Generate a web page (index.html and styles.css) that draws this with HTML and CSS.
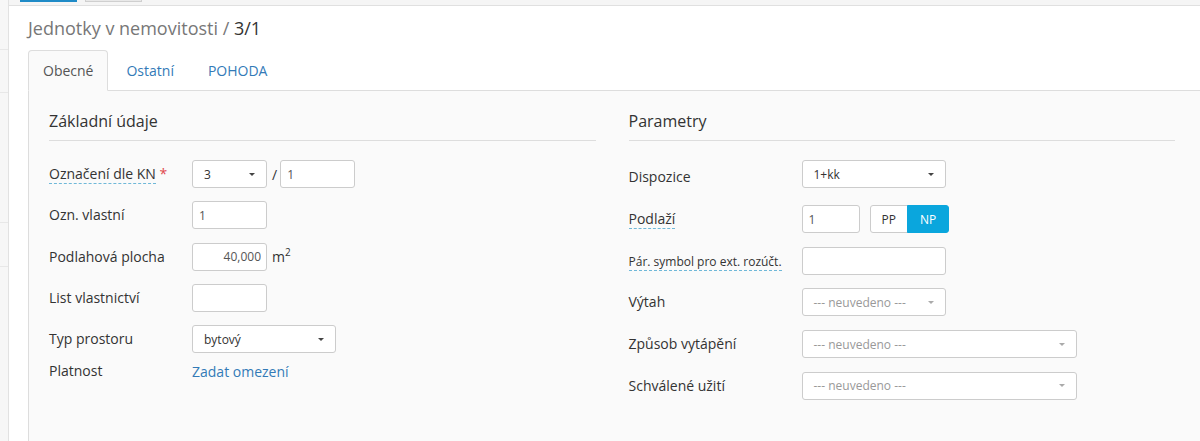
FILE: index.html
```html
<!DOCTYPE html>
<html lang="cs">
<head>
    <meta charset="UTF-8">
    <meta name="viewport" content="width=device-width, initial-scale=1.0">
    <title>Jednotky v nemovitosti</title>
    <link rel="stylesheet" href="styles.css">
</head>
<body>
<div class="app">
    <!-- sidebar, mostly scrolled out of view -->
    <aside class="sidebar">
        <div class="side-row side-row-1"></div>
        <div class="side-row side-row-2"></div>
        <div class="side-row side-row-3"></div>
        <div class="side-row side-row-4"></div>
    </aside>

    <div class="page">
        <div class="toolbar">
            <span class="stub stub-primary"></span>
            <span class="stub stub-default"></span>
        </div>

        <div class="content">
            <h1 class="page-title">Jednotky v nemovitosti / <span class="page-title-id">3/1</span></h1>

            <ul class="tabs">
                <li class="tab active"><a href="#">Obecné</a></li>
                <li class="tab"><a href="#">Ostatní</a></li>
                <li class="tab"><a href="#">POHODA</a></li>
            </ul>

            <div class="tab-panel">
                <div class="columns">
                    <!-- Základní údaje -->
                    <section class="column column-main">
                        <h2 class="section-title">Základní údaje</h2>

                        <div class="field">
                            <label class="field-label"><span class="hint">Označení dle KN</span> <span class="required">*</span></label>
                            <div class="field-control">
                                <div class="select select-xs"><span>3</span><b class="caret"></b></div>
                                <span class="sep">/</span>
                                <input class="input input-xs" type="text" value="1">
                            </div>
                        </div>

                        <div class="field">
                            <label class="field-label">Ozn. vlastní</label>
                            <div class="field-control">
                                <input class="input input-xs" type="text" value="1">
                            </div>
                        </div>

                        <div class="field">
                            <label class="field-label">Podlahová plocha</label>
                            <div class="field-control">
                                <input class="input input-xs input-num" type="text" value="40,000">
                                <span class="unit">m<sup>2</sup></span>
                            </div>
                        </div>

                        <div class="field">
                            <label class="field-label">List vlastnictví</label>
                            <div class="field-control">
                                <input class="input input-xs" type="text" value="">
                            </div>
                        </div>

                        <div class="field field-tight">
                            <label class="field-label">Typ prostoru</label>
                            <div class="field-control">
                                <div class="select select-md"><span>bytový</span><b class="caret"></b></div>
                            </div>
                        </div>

                        <div class="field field-static">
                            <label class="field-label">Platnost</label>
                            <div class="field-control">
                                <a class="link" href="#">Zadat omezení</a>
                            </div>
                        </div>
                    </section>

                    <!-- Parametry -->
                    <section class="column column-side">
                        <h2 class="section-title">Parametry</h2>

                        <div class="field field-spaced">
                            <label class="field-label field-label-low">Dispozice</label>
                            <div class="field-control">
                                <div class="select select-md"><span>1+kk</span><b class="caret"></b></div>
                            </div>
                        </div>

                        <div class="field">
                            <label class="field-label"><span class="hint">Podlaží</span></label>
                            <div class="field-control">
                                <input class="input input-floor" type="text" value="1">
                                <div class="btn-group">
                                    <button class="btn" type="button">PP</button>
                                    <button class="btn active" type="button">NP</button>
                                </div>
                            </div>
                        </div>

                        <div class="field">
                            <label class="field-label"><span class="hint hint-sm">Pár. symbol pro ext. rozúčt.</span></label>
                            <div class="field-control">
                                <input class="input input-md" type="text" value="">
                            </div>
                        </div>

                        <div class="field">
                            <label class="field-label">Výtah</label>
                            <div class="field-control">
                                <div class="select select-md is-empty"><span>--- neuvedeno ---</span><b class="caret"></b></div>
                            </div>
                        </div>

                        <div class="field">
                            <label class="field-label">Způsob vytápění</label>
                            <div class="field-control">
                                <div class="select select-lg is-empty"><span>--- neuvedeno ---</span><b class="caret"></b></div>
                            </div>
                        </div>

                        <div class="field">
                            <label class="field-label">Schválené užití</label>
                            <div class="field-control">
                                <div class="select select-lg is-empty"><span>--- neuvedeno ---</span><b class="caret"></b></div>
                            </div>
                        </div>
                    </section>
                </div>
            </div>
        </div>
    </div>
</div>
</body>
</html>
```

FILE: styles.css
```css
* {
    box-sizing: border-box;
}
html, body {
    margin: 0;
    height: 100%;
    overflow: hidden;
}
body {
    font-family: "Open Sans", "Liberation Sans", sans-serif;
    font-size: 14px;
    color: #333;
    background: #fff;
}
.app {
    display: flex;
    min-height: 100vh;
}

/* sidebar */
.sidebar {
    width: 9px;
    flex-shrink: 0;
    background: #f7f7f7;
    border-right: 1px solid #e2e2e2;
}
.side-row {
    border-bottom: 1px solid #e8e8e8;
}
.side-row-1 { height: 50px; }
.side-row-2 { height: 43px; }
.side-row-3 { height: 130px; }
.side-row-4 { height: 44px; }

.page {
    flex: 1;
    min-width: 0;
    display: flex;
    flex-direction: column;
}

/* toolbar, scrolled up */
.toolbar {
    height: 6px;
    display: flex;
    gap: 8px;
    padding-left: 11px;
    background: #f5f5f5;
    border-bottom: 1px solid #e0e0e0;
}
.stub {
    display: block;
    width: 57px;
    height: 2px;
}
.stub-primary {
    background: #1f8bc7;
}
.stub-default {
    background: #e8e8e8;
    border: 1px solid #cfcfcf;
    border-top: 0;
}

.content {
    flex: 1;
    display: flex;
    flex-direction: column;
    padding: 10px 0 0 19px;
}
.page-title {
    margin: 0 0 10px;
    font-size: 18px;
    line-height: 24px;
    font-weight: 400;
    color: #777;
}
.page-title-id {
    color: #333;
}

/* tabs */
.tabs {
    list-style: none;
    margin: 0;
    padding: 0;
    display: flex;
    border-bottom: 1px solid #ddd;
}
.tab {
    margin: 0 2px -1px 0;
}
.tab a {
    display: block;
    padding: 10px 15px 9px;
    line-height: 20px;
    color: #337ab7;
    text-decoration: none;
    border: 1px solid transparent;
    border-radius: 4px 4px 0 0;
}
.tab.active a {
    padding: 10px 14px 9px;
    color: #555;
    background: #fafafa;
    border-color: #ddd;
    border-bottom-color: transparent;
}

.tab-panel {
    flex: 1;
    background: #fafafa;
    border-left: 1px solid #ddd;
    padding: 19px 25px 0 20px;
}
.columns {
    display: grid;
    grid-template-columns: 1fr 1fr;
    column-gap: 33px;
}
.section-title {
    margin: 0 0 19px;
    padding-bottom: 8px;
    border-bottom: 1px solid #ddd;
    font-size: 16px;
    line-height: 22px;
    font-weight: 400;
    color: #333;
}

/* form rows */
.field {
    display: flex;
    align-items: center;
    min-height: 28px;
    margin-bottom: 13.25px;
}
.column-side .field {
    margin-bottom: 13.7px;
}
.column-side .field-spaced {
    margin-bottom: 17px;
}
.field-tight {
    margin-bottom: 8px;
}
.field-static {
    min-height: 20px;
}
.field-label {
    flex-shrink: 0;
    line-height: 20px;
}
.column-main .field-label {
    width: 143px;
}
.column-side .field-label {
    width: 173px;
}
.field-label-low {
    padding-top: 5px;
}
.field-control {
    display: flex;
    align-items: center;
}
.hint {
    display: inline-block;
    line-height: 18px;
    border-bottom: 1px dashed #6fb8d8;
}
.hint-sm {
    font-size: 12px;
    line-height: 16px;
}
.required {
    color: #e0474c;
}

.input {
    height: 28px;
    padding: 4px 6px;
    font-family: "Open Sans", "Liberation Sans", sans-serif;
    font-size: 12px;
    color: #555;
    background: #fff;
    border: 1px solid #ccc;
    border-radius: 3px;
    outline: none;
}
.input-xs { width: 75px; }
.input-md { width: 144px; }
.input-floor { width: 58px; }
.input-num {
    text-align: right;
    padding-right: 5px;
}

.select {
    display: flex;
    align-items: center;
    justify-content: space-between;
    height: 28px;
    padding: 0 11px;
    font-size: 12px;
    color: #333;
    background: #fff;
    border: 1px solid #ccc;
    border-radius: 3px;
}
.select-xs { width: 75px; }
.select-md { width: 144px; }
.select-lg { width: 275px; }
.select.is-empty {
    color: #999;
}
.caret {
    width: 0;
    height: 0;
    border-top: 3px solid #444;
    border-left: 3px solid transparent;
    border-right: 3px solid transparent;
}
.is-empty .caret {
    border-top-color: #aaa;
}

.sep {
    margin: 0 3px 0 5px;
}
.unit {
    margin-left: 5px;
}
.unit sup {
    font-size: 10px;
    line-height: 0;
}

.btn-group {
    display: flex;
    margin-left: 10px;
}
.btn {
    height: 28px;
    padding: 0 11px;
    font-family: "Open Sans", "Liberation Sans", sans-serif;
    font-size: 12px;
    color: #333;
    background: #fff;
    border: 1px solid #ccc;
    border-radius: 3px 0 0 3px;
    cursor: pointer;
}
.btn + .btn {
    margin-left: -1px;
    padding: 0 12px;
    border-radius: 0 3px 3px 0;
}
.btn.active {
    color: #fff;
    background: #0aa6dd;
    border-color: #0aa6dd;
}

.link {
    color: #337ab7;
    text-decoration: none;
}
```
